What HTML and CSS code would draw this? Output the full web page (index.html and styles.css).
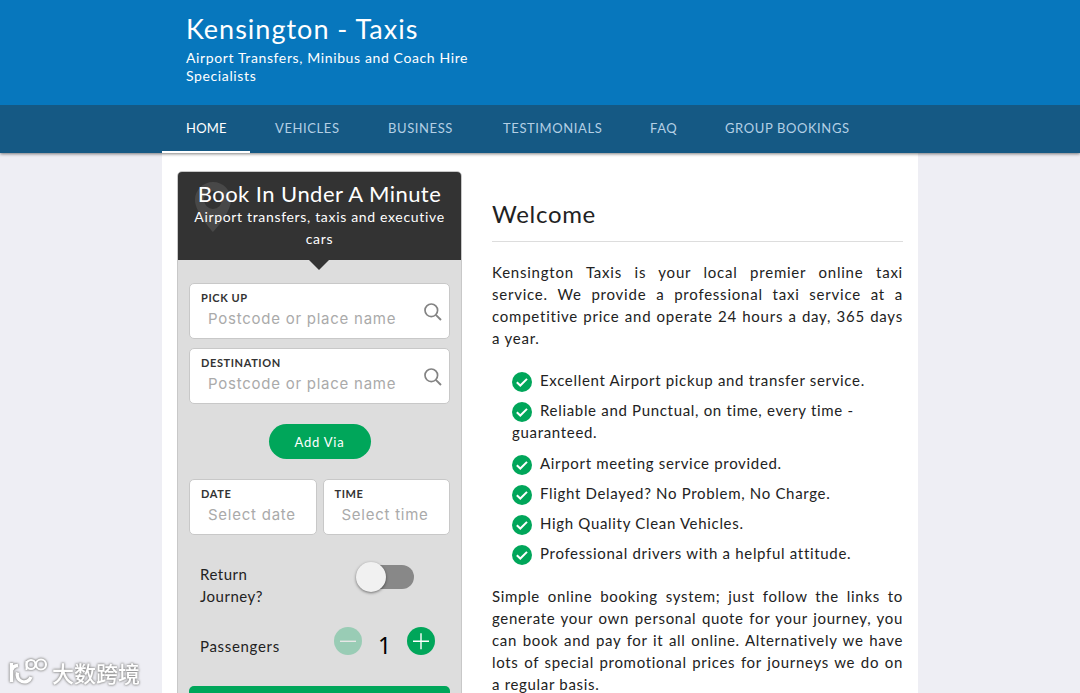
FILE: index.html
```html
<!DOCTYPE html>
<html lang="en">
<head>
  <meta charset="UTF-8" />
  <meta name="viewport" content="width=device-width, initial-scale=1.0"/>
  <title>Kensington - Taxis</title>
  <link rel="stylesheet" href="styles.css">
</head>
<body>

<!-- Shared icons -->
<svg class="sprite" xmlns="http://www.w3.org/2000/svg">
  <symbol id="tick" viewBox="0 0 20 20">
    <circle cx="10" cy="10" r="10" fill="#00a65a"/>
    <path d="M4.800 10.300 L8.300 13.500 L15 6.900" fill="none" stroke="#fff" stroke-width="2"/>
  </symbol>
  <symbol id="search" viewBox="0 0 18 18">
    <circle cx="7.3" cy="7.3" r="6.3" fill="none" stroke="#838383" stroke-width="1.7"/>
    <path d="M11.8 11.8 L17 17" stroke="#838383" stroke-width="1.9"/>
  </symbol>
</svg>

<!-- Header -->
<header class="header">
  <div class="wrap">
    <h1>Kensington - Taxis</h1>
    <p>Airport Transfers, Minibus and Coach Hire Specialists</p>
  </div>
</header>

<!-- Navbar -->
<nav class="navbar">
  <div class="nav-links">
    <a href="#" class="active">HOME</a>
    <a href="#" class="nav-vehicles">VEHICLES</a>
    <a href="#" class="nav-business">BUSINESS</a>
    <a href="#" class="nav-testimonials">TESTIMONIALS</a>
    <a href="#" class="nav-faq">FAQ</a>
    <a href="#" class="nav-group">GROUP BOOKINGS</a>
  </div>
</nav>

<!-- Main Content -->
<main class="container">

  <!-- Booking form -->
  <section class="booking">
    <div class="booking-head">
      <svg class="pin" viewBox="0 0 36 50"><path fill="#484848" fill-rule="evenodd" d="M18 0C8 0 0 8 0 18c0 13 18 32 18 32s18-19 18-32C36 8 28 0 18 0zm0 9a9 9 0 1 1 0 18 9 9 0 0 1 0-18z"/></svg>
      <h2>Book In Under A Minute</h2>
      <p>Airport transfers, taxis and executive cars</p>
    </div>
    <form class="booking-body">
      <div class="field">
        <label for="pickup">PICK UP</label>
        <input id="pickup" type="text" placeholder="Postcode or place name">
        <svg class="search-icon"><use href="#search"/></svg>
      </div>
      <div class="field">
        <label for="destination">DESTINATION</label>
        <input id="destination" type="text" placeholder="Postcode or place name">
        <svg class="search-icon"><use href="#search"/></svg>
      </div>
      <button type="button" class="via">Add Via</button>
      <div class="field-row">
        <div class="field">
          <label for="date">DATE</label>
          <input id="date" type="text" placeholder="Select date">
        </div>
        <div class="field">
          <label for="time">TIME</label>
          <input id="time" type="text" placeholder="Select time">
        </div>
      </div>
      <div class="return-row">
        <span>Return<br>Journey?</span>
        <div class="switch"><div class="knob"></div></div>
      </div>
      <div class="passenger-row">
        <span>Passengers</span>
        <div class="counter">
          <svg class="minus" viewBox="0 0 28 28"><circle cx="14" cy="14" r="14" fill="#00a65a"/><path d="M6 14.3h16" stroke="#fff" stroke-width="1.4"/></svg>
          <span class="count">1</span>
          <svg viewBox="0 0 28 28"><circle cx="14" cy="14" r="14" fill="#00a65a"/><path d="M6 14.3h16M14 6.3v16" stroke="#fff" stroke-width="1.4"/></svg>
        </div>
      </div>
      <button type="button" class="quote"></button>
    </form>
  </section>

  <!-- Welcome text -->
  <section class="content">
    <h2>Welcome</h2>
    <p class="intro">Kensington Taxis is your local premier online taxi service. We provide a professional taxi service at a competitive price and operate 24 hours a day, 365 days a year.</p>
    <ul>
      <li><svg><use href="#tick"/></svg>Excellent Airport pickup and transfer service.</li>
      <li><svg><use href="#tick"/></svg>Reliable and Punctual, on time, every time - guaranteed.</li>
      <li><svg><use href="#tick"/></svg>Airport meeting service provided.</li>
      <li><svg><use href="#tick"/></svg>Flight Delayed? No Problem, No Charge.</li>
      <li><svg><use href="#tick"/></svg>High Quality Clean Vehicles.</li>
      <li><svg><use href="#tick"/></svg>Professional drivers with a helpful attitude.</li>
    </ul>
    <p>Simple online booking system; just follow the links to generate your own personal quote for your journey, you can book and pay for it all online. Alternatively we have lots of special promotional prices for journeys we do on a regular basis.</p>
  </section>
</main>

<div class="watermark">
  <svg viewBox="0 0 40 28" fill="none" stroke="#fff" stroke-width="3">
    <path d="M2.500 5v19M3 12q0.500-4 6-4.500M8.500 14.500a7 7 0 0 0 13.500 4.500" stroke-width="3.400"/>
    <path d="M17.500 3v9" stroke-width="2"/>
    <circle cx="22" cy="6.500" r="4.500" stroke-width="2.200"/>
    <circle cx="32" cy="6.500" r="5" stroke-width="2.200"/>
  </svg>
  <span>大数跨境</span>
</div>

</body>
</html>
```
FILE: styles.css
```css
* { box-sizing: border-box; margin: 0; padding: 0; }
body { font-family: Lato, 'Liberation Sans', sans-serif; font-size: 15px; line-height: 22px; letter-spacing: 0.68px; color: #222; background: #eeeef4; height: 693px; overflow: hidden; }
.sprite { display: none; }
.header { background: #0777bd; color: #fff; height: 105px; }
.wrap { width: 756px; margin: auto; padding: 12px 24px 0; }
.header h1 { font-size: 27px; line-height: 34px; font-weight: normal; letter-spacing: 1px; }
.header p { width: 300px; font-size: 14px; line-height: 18px; letter-spacing: 0.62px; margin-top: 3px; }
.navbar { position: relative; background: #155984; height: 48px; box-shadow: 0 1px 3px rgba(0, 0, 0, 0.5); clip-path: inset(0 0 -6px); }
.nav-links { width: 756px; margin: auto; display: flex; }
.nav-links a { height: 48px; line-height: 47px; padding: 0 24px; color: #b3cfe4; font-size: 13px; letter-spacing: 0.6px; text-decoration: none; white-space: nowrap; }
.nav-links a.active { color: #fff; border-bottom: 2px solid #fff; width: 88px; margin-right: 1px; letter-spacing: 0.2px; }
.nav-vehicles { width: 113px; }
.nav-business { width: 115px; }
.nav-testimonials { width: 147px; }
.nav-faq { width: 75px; }
.container { width: 756px; height: 540px; margin: auto; padding: 18px 15px 0; display: flex; align-items: flex-start; gap: 30px; background: #fff; overflow: hidden; }
.booking { width: 285px; flex: none; border: 1px solid #c8c8c8; border-radius: 5px; background: #ddd; }
.booking-head { position: relative; height: 88px; padding: 8px 10px 0; background: #333; color: #fff; text-align: center; border-radius: 4px 4px 0 0; }
.booking-head::after { content: ""; position: absolute; left: 131px; top: 88px; border: 10px solid transparent; border-top-color: #333; border-bottom: none; }
.booking-head h2 { position: relative; font-size: 22px; line-height: 27px; font-weight: normal; letter-spacing: 0.45px; white-space: nowrap; }
.booking-head p { position: relative; font-size: 14px; letter-spacing: 0.67px; margin-top: -1px; }
.pin { position: absolute; left: 17px; top: 10px; width: 36px; height: 50px; }
.booking-body { padding: 23px 11px 0; }
.field { position: relative; height: 56px; padding: 6px 11px 0; margin-bottom: 9px; background: #fff; border: 1px solid #c8c8c8; border-radius: 5px; }
.field label { display: block; font-size: 11px; line-height: 15px; font-weight: bold; letter-spacing: 0.6px; color: #333; }
.field input { display: block; width: 100%; height: 24px; margin-top: 1px; padding-left: 7px; border: none; outline: none; background: none; font-family: Inter, sans-serif; font-size: 15px; letter-spacing: 0.75px; }
.field input::placeholder { color: #aaa; }
.search-icon { position: absolute; right: 7px; top: 19px; width: 18px; height: 18px; }
.via { display: block; width: 102px; height: 35px; margin: 20px auto; border: none; border-radius: 18px; background: #00a65a; color: #fff; font-family: inherit; font-size: 13px; letter-spacing: 0.8px; cursor: pointer; }
.field-row { display: grid; grid-template-columns: 1fr 1fr; gap: 6px; }
.return-row { display: flex; justify-content: space-between; align-items: flex-start; padding: 19px 36px 0 11px; }
.return-row span { letter-spacing: 0.5px; }
.switch { width: 56px; height: 24px; margin-top: 2px; border-radius: 12px; background: #888; }
.knob { width: 30px; height: 30px; margin: -3px 0 0 -2px; border-radius: 50%; background: #f1f1f1; box-shadow: 0 1px 3px rgba(0, 0, 0, 0.5); }
.passenger-row { display: flex; justify-content: space-between; padding: 20px 15px 0 11px; height: 79px; }
.passenger-row > span { padding-top: 8px; }
.counter { display: flex; width: 101px; justify-content: space-between; }
.counter svg { width: 28px; height: 28px; }
.counter .minus { opacity: 0.3; }
.count { font-family: 'Noto Sans', sans-serif; font-size: 23px; line-height: 36px; color: #000; letter-spacing: 0; }
.quote { display: block; width: 100%; height: 48px; border: none; border-radius: 5px; background: #00a65a; }
.content { width: 411px; flex: none; padding-top: 27px; }
.content h2 { font-size: 24px; line-height: 32px; height: 44px; font-weight: normal; letter-spacing: 0.7px; border-bottom: 1px solid #ddd; margin-bottom: 19px; }
.content p { text-align: justify; }
.content .intro { letter-spacing: 0.77px; }
.content ul { list-style: none; margin: 20px 0 20.7px; padding-left: 20px; }
.content li { margin-bottom: 8.25px; }
.content li svg { width: 20px; height: 20px; margin-right: 8px; vertical-align: top; margin-top: 3px; margin-bottom: -3px; }
.watermark { position: fixed; left: 9px; bottom: 7px; display: flex; align-items: flex-end; gap: 3px; color: #fff; font-family: 'Noto Sans CJK SC', sans-serif; font-size: 22px; font-weight: 500; line-height: 28px; letter-spacing: 0; filter: drop-shadow(0 0 1px #888) drop-shadow(0 0 1px #aaa); }
.watermark svg { width: 40px; height: 28px; }
```
